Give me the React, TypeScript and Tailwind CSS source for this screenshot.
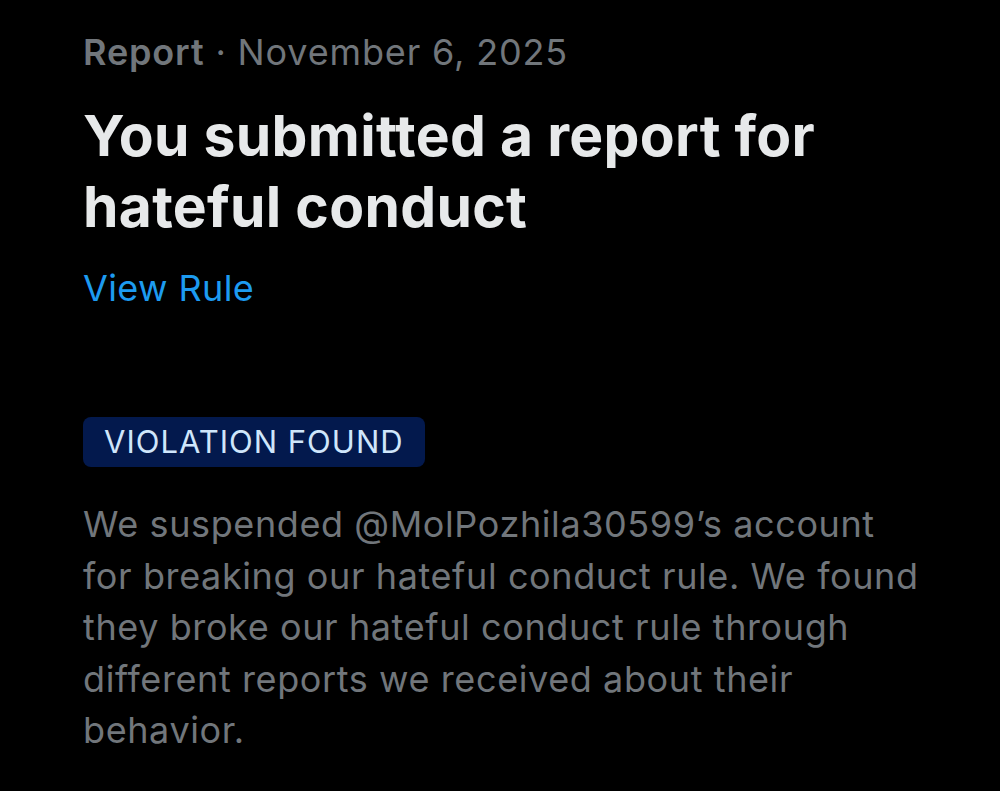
export default function App() {
  return (
    <div className="min-h-[791px] w-[1000px] bg-black font-['Inter',sans-serif] text-[#71767b]">
      <div className="pl-[83px] pt-[28px]">
        {/* header line */}
        <div className="text-[36px] leading-[48px] tracking-[0.85px]">
          <span className="font-semibold">Report</span>
          <span> · November 6, 2025</span>
        </div>

        <h1 className="mt-[24px] text-[57px] font-bold leading-[71px] tracking-[0.3px] text-[#e7e9ea]">
          You submitted a report for
          <br />
          hateful conduct
        </h1>

        <a className="mt-[22px] block text-[36px] leading-[48px] tracking-[0.4px] text-[#1d9bf0]">View Rule</a>

        <div className="mt-[105px]">
          <span className="inline-flex h-[50px] items-center rounded-[8px] bg-[#03194d] px-[21px] text-[31px] tracking-[1px] text-[#cfe6fb]">
            VIOLATION FOUND
          </span>
        </div>

        <p className="mt-[32px] w-[840px] text-[36px] leading-[51.5px] tracking-[0.6px]">
          We suspended @MolPozhila30599’s account for breaking our hateful conduct rule. We found they broke our
          hateful conduct rule through different reports we received about their behavior.
        </p>
      </div>
    </div>
  );
}
